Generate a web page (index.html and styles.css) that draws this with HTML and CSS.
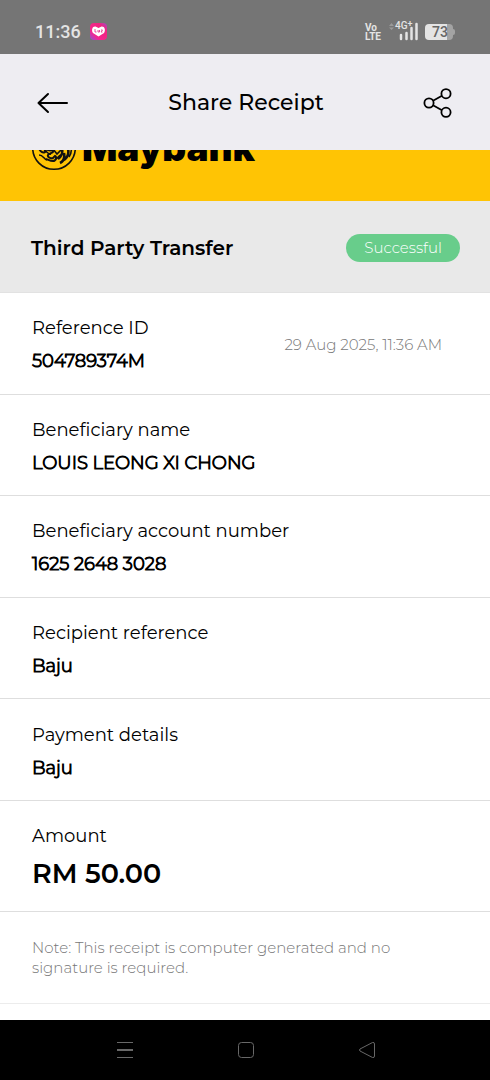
FILE: index.html
```html
<!DOCTYPE html>
<html lang="en">
<head>
<meta charset="utf-8">
<meta name="viewport" content="width=device-width, initial-scale=1">
<title>Share Receipt</title>
<link rel="stylesheet" href="styles.css">
</head>
<body>
<div class="screen">
  <div class="status">
    <span class="clock">11:36</span>
    <svg class="app-icon" width="17" height="17" viewBox="0 0 17 17" aria-hidden="true">
      <defs><linearGradient id="pink" x1="0" y1="1" x2="1" y2="0"><stop offset="0" stop-color="#8b52d6"/><stop offset=".3" stop-color="#f5268f"/><stop offset=".75" stop-color="#ee2480"/><stop offset="1" stop-color="#a04bc8"/></linearGradient></defs>
      <rect width="17" height="17" rx="4" fill="url(#pink)"/>
      <path d="M8.500 13.500L3 10C1 7 2.500 3 5.500 3.500L8.500 5L11.500 3.500C14.500 3 16 7 14 10Z" fill="#fff"/>
      <path d="M5 6v3h1.500M8 7v2h1.500V7M11 7h1.500L11 9h1.500" fill="none" stroke="#e84b9b"/>
    </svg>
    <span class="spacer"></span>
    <span class="volte">Vo<br>LTE</span>
    <span class="signal">
      <svg width="29" height="19" viewBox="0 0 29 19" aria-hidden="true">
        <path d="M0 4l2.500-3L5 4zM0 5.500L2.500 8 5 5.500z" fill="#999"/>
        <path d="M12 13v4M17.500 11v6M22.500 6v11M27.500 2v15" stroke="#e4e4e4" stroke-width="2.500" stroke-linecap="round"/>
      </svg>
      <span class="network">4G<sup>+</sup></span>
    </span>
    <span class="battery"><span class="cell">73</span><span class="tip"></span></span>
  </div>

  <header class="topbar">
    <button class="icon-button" aria-label="Back">
      <svg width="32" height="22" viewBox="0 0 32 22" fill="none" stroke="#000" stroke-width="2" stroke-linecap="round" stroke-linejoin="round"><path d="M30 11H1.500M11 2L1.500 11L11 20"/></svg>
    </button>
    <h1 class="heading">Share Receipt</h1>
    <button class="icon-button" aria-label="Share">
      <svg width="30" height="30" viewBox="0 0 30 30" fill="none" stroke="#000" stroke-width="1.800"><circle cx="6" cy="15" r="4.600"/><circle cx="23" cy="5.700" r="4.600"/><circle cx="23" cy="24.300" r="4.600"/><path d="M10 12.800l9-5M10 17.200l9 5"/></svg>
    </button>
  </header>

  <main class="receipt">
    <div class="banner">
      <svg class="tiger" width="46" height="46" viewBox="0 0 46 46" fill="none" stroke="#111" aria-hidden="true">
        <circle cx="23" cy="23" r="21.300" stroke-width="1.600"/>
        <path d="M8 23c1 4 4 5 6 4l1-3c4 3 6 0 7 2s-4 2-5 4 3 4 5 3l2-2c2 1 1 5-2 5-3 0-4-1-7-2" stroke-width="2"/>
        <path d="M13 25c3 1 4 5 7 4M22 24l4 5 5-5M25 34c2-1 3-4 5-4M8 30c4 0 5 4 8 5" stroke-width="1.600"/>
        <path d="M29 38c4-2 5-5 4-10M33 35c4-3 5-7 4-11M27 34c3-2 5-6 4-10" stroke-width="2.600"/>
        <path d="M38 32c2-3 3-6 2-10" stroke-width="1.600"/>
      </svg>
      <span class="wordmark">Maybank</span>
    </div>
    <section class="title-row">
      <h2 class="title">Third Party Transfer</h2>
      <span class="badge">Successful</span>
    </section>
    <dl class="details">
      <div class="row split">
        <div><dt>Reference ID</dt><dd>504789374M</dd></div>
        <time class="date" datetime="2025-08-29T11:36">29 Aug 2025, 11:36 AM</time>
      </div>
      <div class="row"><dt>Beneficiary name</dt><dd>LOUIS LEONG XI CHONG</dd></div>
      <div class="row"><dt>Beneficiary account number</dt><dd>1625 2648 3028</dd></div>
      <div class="row"><dt>Recipient reference</dt><dd>Baju</dd></div>
      <div class="row"><dt>Payment details</dt><dd>Baju</dd></div>
      <div class="row amount"><dt>Amount</dt><dd>RM 50.00</dd></div>
    </dl>
    <p class="note">Note: This receipt is computer generated and no signature is required.</p>
  </main>

  <nav class="navbar">
    <button class="icon-button" aria-label="Recent apps"><svg width="18" height="18" viewBox="0 0 18 18" stroke="#686868"><path d="M1 1.500h16M1 16.500h16"/><path d="M1 9h16" stroke-width="2"/></svg></button>
    <button class="icon-button" aria-label="Home"><svg width="18" height="18" viewBox="0 0 18 18" fill="none" stroke="#686868"><rect x="1.500" y="1.500" width="15" height="15" rx="3"/></svg></button>
    <button class="icon-button" aria-label="Back navigation"><svg width="18" height="18" viewBox="0 0 18 18" fill="none" stroke="#686868" stroke-linejoin="round"><path d="M2 8Q1 9 2 10L14.500 16.500Q16.500 17 16.500 15V3Q16.500 1 14.500 1.500Z"/></svg></button>
  </nav>
</div>
</body>
</html>
```
FILE: styles.css
```css
* { box-sizing: border-box; margin: 0; padding: 0; }
body { font-family: Montserrat, Inter, "Open Sans", sans-serif; font-variant-ligatures: none; color: #000; background: #fff; }
.screen { display: flex; flex-direction: column; min-height: 100vh; }

.status { display: flex; align-items: center; height: 54px; padding: 9px 35px 0 35px; background: #757575; color: #e4e4e4; font-family: Roboto, sans-serif; }
.clock { font-size: 18px; font-weight: 500; line-height: 20px; }
.app-icon { margin-left: 9px; }
.spacer { flex: 1; }
.volte { font-size: 10px; font-weight: 700; line-height: 9px; }
.signal { position: relative; display: flex; margin-left: 8px; }
.network { position: absolute; left: 6px; top: -1px; font-size: 10px; font-weight: 500; line-height: 10px; }
.network sup { font-size: 9px; line-height: 1px; vertical-align: 2px; }
.battery { display: flex; align-items: center; margin-left: 7px; }
.cell { width: 28px; padding-left: 2px; border-radius: 4px; background: linear-gradient(90deg, #e4e4e4 80%, #a3a3a3 80%); color: #666; font-size: 14px; font-weight: 500; line-height: 16px; text-align: center; }
.tip { width: 2px; height: 6px; border-radius: 0 2px 2px 0; background: #a3a3a3; }

.icon-button { display: flex; border: 0; background: none; cursor: pointer; }
.topbar { display: flex; align-items: center; justify-content: space-between; height: 96px; padding: 2px 37px 0; background: #eeedf2; }
.heading { font-size: 22px; font-weight: 500; line-height: 28px; }

.receipt { display: flex; flex: 1; flex-direction: column; }
.banner { display: flex; align-items: flex-end; gap: 5px; height: 51px; padding: 0 31px 30px; overflow: hidden; background: #ffc404; }
.tiger { flex: none; }
.wordmark { font-family: Inter, sans-serif; font-size: 37px; font-weight: 900; line-height: 46px; }
.title-row { display: flex; align-items: center; justify-content: space-between; height: 92px; padding: 2px 30px 0 31px; border-bottom: 1px solid #e2e2e2; background: #e9e9e9; }
.title { font-size: 20px; font-weight: 600; line-height: 28px; }
.badge { padding: 0 18px; border-radius: 14px; background: #68cd8b; color: #fff; font-size: 15px; font-weight: 300; line-height: 28px; }

.details { display: flex; flex: 1; flex-direction: column; }
.row { display: flex; flex: 1; flex-direction: column; justify-content: center; padding: 3px 32px 0; border-bottom: 1px solid #dedede; }
.split { flex-direction: row; align-items: center; justify-content: space-between; padding-right: 48px; }
dt { font-size: 18px; font-weight: 400; line-height: 33px; }
dd { font-size: 18px; font-weight: 300; line-height: 32px; -webkit-text-stroke: 1px; }
.date { color: #777; font-size: 15px; font-weight: 300; }
.amount { flex: none; height: 111px; }
.amount dd { font-size: 27px; font-weight: 600; line-height: 42px; -webkit-text-stroke: 0; }
.note { margin-bottom: 16px; padding: 26px 80px 25px 32px; border-bottom: 1px solid #ececec; color: #777; font-size: 15px; font-weight: 300; line-height: 20px; }

.navbar { display: flex; align-items: center; justify-content: space-between; height: 60px; padding: 0 114px 0 116px; background: #000; }
```
